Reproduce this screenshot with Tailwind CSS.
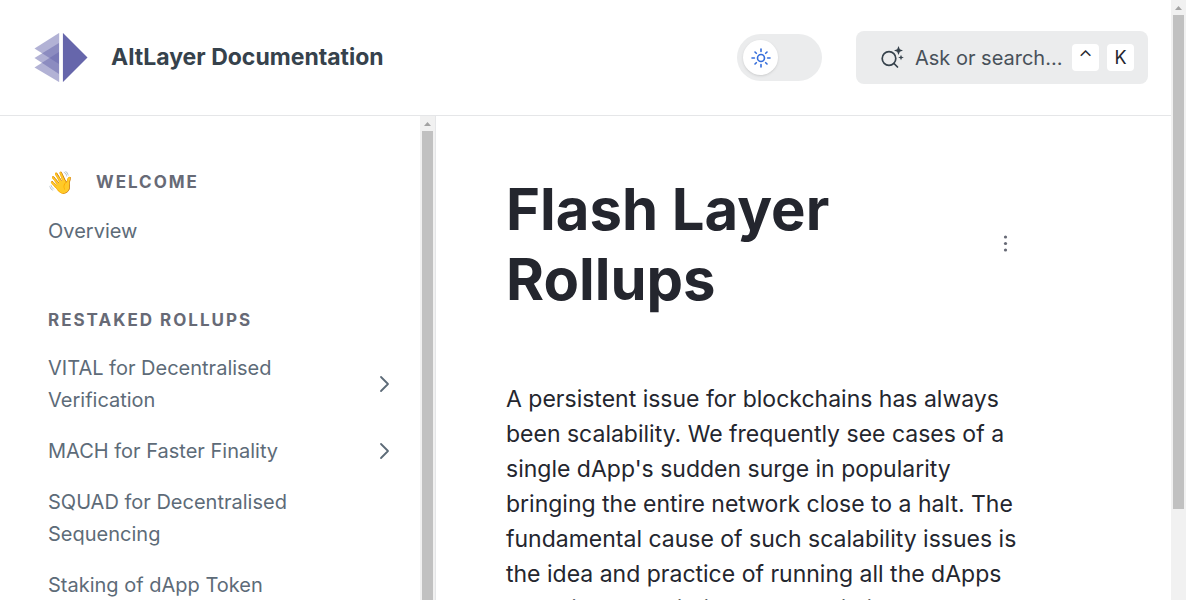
<!DOCTYPE html>
<html lang="en">
<head>
<meta charset="utf-8">
<meta name="viewport" content="width=device-width, initial-scale=1">
<title>Flash Layer Rollups | AltLayer Documentation</title>
<script src="https://cdn.jsdelivr.net/npm/@tailwindcss/browser@4"></script>
</head>
<body class="flex h-screen overflow-hidden bg-white font-['Inter',sans-serif] text-[#24262e]">
<div class="flex min-w-0 flex-1 flex-col">
  <header class="flex h-[116px] shrink-0 items-center border-b border-[#e5e6e8] pr-[23px] pl-8">
    <a href="#" class="flex items-center gap-[23px] text-[23px] font-bold text-[#36424c]">
      <svg class="h-14 w-14" viewBox="0 0 56 56" aria-hidden="true">
        <g fill="#6666ab" fill-opacity=".5">
          <path d="M27 3v31L2.500 18.500z"/>
          <path d="M27 13v31L2.500 28z"/>
          <path d="M27 22v30L2.500 37.500z"/>
        </g>
        <path d="M27.500 3h3v49h-3z" fill="#e4e4f1"/>
        <path d="M28 3h2v49h-2z" fill="#fff"/>
        <path d="M31 3l24.500 24.500L31 52z" fill="#6666ab"/>
      </svg>
      <span>AltLayer Documentation</span>
    </a>
    <button type="button" role="switch" aria-checked="false" aria-label="Toggle dark mode" class="ml-auto flex h-[47px] w-[85px] shrink-0 items-center rounded-full bg-[#ebeced] px-1.5">
      <span class="flex h-[35px] w-[35px] items-center justify-center rounded-full bg-white shadow">
        <svg class="h-5 w-5" viewBox="0 0 20 20" fill="none" stroke="#346ddb" stroke-width="1.600" stroke-linecap="round" aria-hidden="true">
          <circle cx="10" cy="10" r="3.500"/>
          <path d="M10 1v2.400M10 16.600V19M1 10h2.400M16.600 10H19M4 4l1.300 1.300M14.700 14.700L16 16M16 4l-1.300 1.300M5.300 14.700L4 16"/>
        </svg>
      </span>
    </button>
    <button type="button" class="ml-[34px] flex h-[53px] w-[292px] shrink-0 items-center rounded-lg bg-[#ebeced] pr-3.5 pl-6 text-xl text-[#48515a]">
      <svg class="h-6 w-6 shrink-0" viewBox="0 0 24 24" fill="none" stroke="#36424c" stroke-width="1.700" stroke-linecap="round" aria-hidden="true">
        <circle cx="9" cy="12.500" r="6.800"/>
        <path d="M14 17.500l3.500 3.500"/>
        <path d="M18.500 0l1.300 3.200 3.200 1.300-3.200 1.300-1.300 3.200-1.300-3.200L14 4.500l3.200-1.300zM21 8.700l.8 2 2 .8-2 .8-.8 2-.8-2-2-.8 2-.8z" fill="#36424c" stroke="none"/>
      </svg>
      <span class="ml-[11px] whitespace-nowrap">Ask or search…</span>
      <span class="ml-auto flex gap-2 text-lg text-[#24262e]">
        <kbd class="flex h-[27px] w-[27px] items-center justify-center rounded bg-white font-['Inter',sans-serif]">⌃</kbd>
        <kbd class="flex h-[27px] w-[27px] items-center justify-center rounded bg-white font-['Inter',sans-serif]">K</kbd>
      </span>
    </button>
  </header>
  <div class="flex min-h-0 flex-1">
    <aside class="flex w-[436px] shrink-0 border-r border-[#e5e6e8]">
      <nav class="min-w-0 flex-1 overflow-hidden pt-[50px] pr-[26px] pl-12 text-xl leading-8 text-[#5d6b78]">
        <h2 class="flex items-center gap-6 text-[17px] leading-8 font-bold tracking-[2px] text-[#676a76]"><span class="flex w-6 justify-center text-[22px] tracking-normal">👋</span>WELCOME</h2>
        <a href="#" class="mt-[17px] block">Overview</a>
        <h2 class="mt-[57px] text-[17px] leading-8 font-bold tracking-[2px] text-[#676a76]">RESTAKED ROLLUPS</h2>
        <ul class="mt-4 flex flex-col gap-[19px]">
          <li><a href="#" class="flex items-center justify-between"><span class="w-[260px]">VITAL for Decentralised Verification</span><svg class="h-5 w-5" viewBox="0 0 20 20" fill="none" stroke="#5d6b78" stroke-width="1.800" stroke-linecap="round" stroke-linejoin="round" aria-hidden="true"><path d="M7 3l7 7-7 7"/></svg></a></li>
          <li><a href="#" class="flex items-center justify-between"><span class="w-[260px]">MACH for Faster Finality</span><svg class="h-5 w-5" viewBox="0 0 20 20" fill="none" stroke="#5d6b78" stroke-width="1.800" stroke-linecap="round" stroke-linejoin="round" aria-hidden="true"><path d="M7 3l7 7-7 7"/></svg></a></li>
          <li><a href="#" class="block w-[260px]">SQUAD for Decentralised Sequencing</a></li>
          <li><a href="#" class="block">Staking of dApp Token</a></li>
        </ul>
      </nav>
      <div class="flex w-[15px] shrink-0 flex-col items-center bg-[#f1f1f1]" aria-hidden="true">
        <svg class="h-[15px] w-[15px] shrink-0" viewBox="0 0 15 15"><path d="M4 10h7L7.500 6z" fill="#a3a3a3"/></svg>
        <div class="w-[11px] flex-1 bg-[#c1c1c1]"></div>
      </div>
    </aside>
    <main class="min-w-0 flex-1 overflow-hidden pt-[58px] pr-[150px] pl-[70px]">
      <div class="flex items-center justify-between">
        <h1 class="w-[400px] text-[58px] leading-[70px] font-bold">Flash Layer Rollups</h1>
        <button type="button" aria-label="More actions" class="flex h-6 w-8 items-center justify-center">
          <svg class="h-6 w-6" viewBox="0 0 24 24" fill="#676a76" aria-hidden="true"><circle cx="12.500" cy="5" r="1.600"/><circle cx="12.500" cy="11.500" r="1.600"/><circle cx="12.500" cy="18" r="1.600"/></svg>
        </button>
      </div>
      <p class="mt-[68px] text-[23px] leading-[35px]">A persistent issue for blockchains has always<br>been scalability. We frequently see cases of a<br>single dApp's sudden surge in popularity<br>bringing the entire network close to a halt. The<br>fundamental cause of such scalability issues is<br>the idea and practice of running all the dApps<br>on a single L1 within the same limits.</p>
    </main>
  </div>
</div>
<div class="flex w-[15px] shrink-0 flex-col items-center bg-[#f1f1f1]" aria-hidden="true">
  <svg class="h-[15px] w-[15px] shrink-0" viewBox="0 0 15 15"><path d="M4 10h7L7.500 6z" fill="#a3a3a3"/></svg>
  <div class="h-[82.400%] w-[11px] bg-[#c1c1c1]"></div>
</div>
</body>
</html>
